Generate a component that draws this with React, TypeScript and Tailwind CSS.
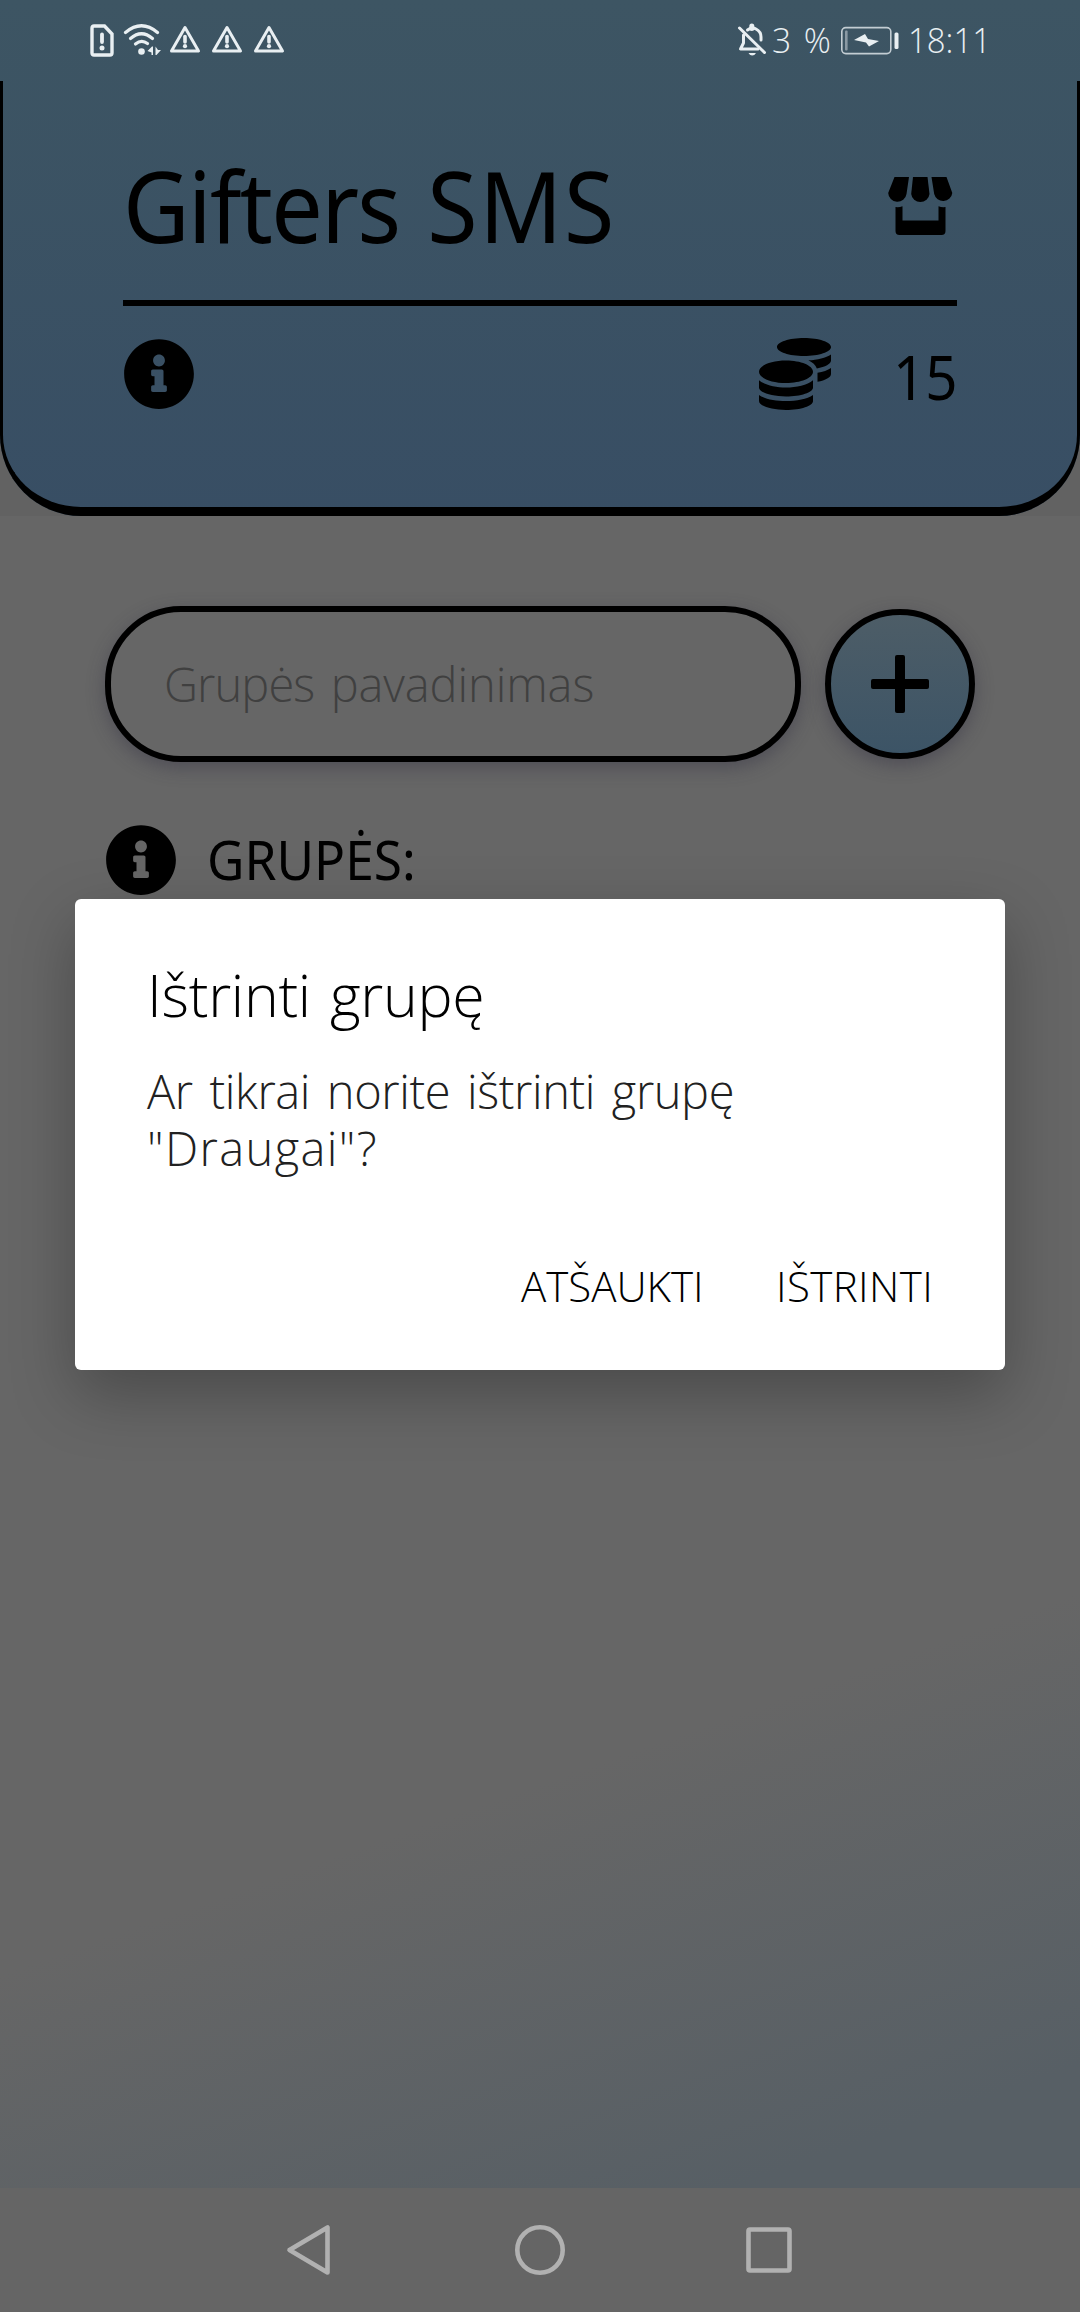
import type { ReactNode } from "react";
import { FaCoins, FaInfoCircle } from "react-icons/fa";

function Warning() {
  return (
    <svg width="32" height="32" viewBox="0 0 32 32" className="shrink-0">
      <path d="M16 4.500 L29.500 28 H2.500 Z" fill="none" stroke="#e9eff2" strokeWidth="3" strokeLinejoin="round" />
      <path d="M16 13.500V19" stroke="#e9eff2" strokeWidth="3.600" strokeLinecap="round" />
      <circle cx="16" cy="23.200" r="2.100" fill="#e9eff2" />
    </svg>
  );
}

function StatusBar() {
  return (
    <div className="flex h-[81px] items-start justify-between pl-[89px] pr-[96px] pt-[22px] text-[#e9eff2]">
      <div className="flex">
        <svg width="26" height="36" viewBox="0 0 26 36">
          <path d="M5 4 H15.500 L23 12 V31 Q23 33 21 33 H5 Q3 33 3 31 V6 Q3 4 5 4 Z" fill="none" stroke="#e9eff2" strokeWidth="3.400" />
          <path d="M13 12.500 V20" stroke="#e9eff2" strokeWidth="3.800" strokeLinecap="round" />
          <circle cx="13" cy="26" r="2.500" fill="#e9eff2" />
        </svg>
        <svg width="40" height="36" viewBox="0 0 40 36" className="ml-[7px]">
          <g fill="none" stroke="#e9eff2" strokeWidth="3.200" strokeLinecap="round">
            <path d="M3.500 10.500 Q19.500 -3 35.500 10.500" />
            <path d="M8.500 16.500 Q19.500 7 30.500 16.500" />
            <path d="M13.500 22 Q19.500 17 25.500 21.500" />
          </g>
          <circle cx="19.500" cy="29.500" r="3.300" fill="#e9eff2" />
          <path d="M25.500 29 L30 24.500 H31 V33 H29.500 V30.500 Z M33.500 24.500 L36 28 H39 L34.500 33 H33.500 Z" fill="#e9eff2" />
        </svg>
        <div className="ml-[7px] flex gap-[10px] pt-[1px]">
          <Warning />
          <Warning />
          <Warning />
        </div>
      </div>
      <div className="flex">
        <svg width="30" height="36" viewBox="0 0 30 36">
          <g fill="none" stroke="#e9eff2" strokeWidth="3" strokeLinecap="round" strokeLinejoin="round">
            <path d="M6.500 13 V21 L3.500 27 H21" />
            <path d="M10.500 8 Q15 4.500 19 7 Q24 9.500 24 15 V18" />
            <path d="M14.800 4 V6.500" strokeWidth="5" />
            <path d="M2.500 6 L27.500 30.500" />
          </g>
          <path d="M11.500 31 H19 Q17.500 33.500 15.200 33.500 Q13 33.500 11.500 31Z" fill="#e9eff2" />
        </svg>
        <span className="ml-[5px] w-[60px] origin-left scale-x-[0.96] whitespace-nowrap font-['Open_Sans'] text-[35px] font-light leading-[36px] [word-spacing:4px]">3 %</span>
        <svg width="60" height="36" viewBox="0 0 60 36" className="ml-[8px]">
          <rect x="1.800" y="5.600" width="49" height="26" rx="4" fill="none" stroke="#c3cdd3" strokeWidth="1.600" />
          <rect x="5" y="8.500" width="2.600" height="20" rx="1" fill="#8b9aa4" />
          <path d="M25 12 L28 17 L39 19 L29 24.500 L26 20.500 L14 18 Z" fill="#e9eff2" />
          <rect x="54.500" y="10.500" width="4" height="16.500" rx="1.500" fill="#e9eff2" />
        </svg>
        <span className="ml-[8px] w-[76px] origin-left scale-x-[0.94] whitespace-nowrap font-['Open_Sans'] text-[35px] font-light leading-[36px]">18:11</span>
      </div>
    </div>
  );
}

function StoreIcon() {
  return (
    <svg width="66" height="60" viewBox="0 0 66 60">
      <path d="M7.500 1 H22 L19.500 18 A9.200 9 0 0 1 1.200 17 Z" />
      <path d="M26 1 H40.500 L42.500 18 A9.200 9 0 0 1 24.200 18 Z" />
      <path d="M44.500 1 H59.500 L65.300 17 A9.200 9 0 0 1 47.200 18 Z" />
      <path d="M8.500 31 Q12 31.500 15.500 30.300 V44.500 H51.500 V30.300 Q55 31.500 58.500 31 V55 Q58.500 59 54.500 59 H12.500 Q8.500 59 8.500 55 Z" />
    </svg>
  );
}

function Header() {
  return (
    <header className="h-[435px] rounded-b-[81px] border-x-[3px] border-b-[9px] border-black px-[120px]">
      <div className="flex h-[219px] items-start justify-between pt-[74px]">
        <h1 className="origin-left scale-x-[0.925] whitespace-nowrap text-[99px] leading-[100px]">
          <span className="tracking-[-1.8px] [word-spacing:6px]">Gifters </span>
          <span className="tracking-[1.8px]">SMS</span>
        </h1>
        <div className="mr-[4px] mt-[21px]">
          <StoreIcon />
        </div>
      </div>
      <div className="h-[6px] bg-black" />
      <div className="flex items-start justify-between pt-[32px]">
        <FaInfoCircle size={72} />
        <div className="flex">
          <FaCoins size={72} />
          <span className="ml-[62px] w-[64px] origin-left scale-x-[0.91] text-[62px] leading-[76px]">15</span>
        </div>
      </div>
    </header>
  );
}

function GroupForm() {
  return (
    <div className="flex items-center gap-6 pl-[105px] pt-[90px]">
      <div className="flex h-[156px] w-[696px] items-center rounded-[76px] border-[6px] border-black bg-[#666] px-[53px] shadow-[0_6px_18px_rgba(50,48,66,0.45)]">
        <span className="whitespace-nowrap font-['Open_Sans'] text-[47px] font-light leading-[60px] text-[#404040]">
          <span className="tracking-[-0.9px] [word-spacing:5px]">Grupės </span>
          <span className="tracking-[-0.1px]">pavadinimas</span>
        </span>
      </div>
      <div className="flex size-[150px] items-center justify-center rounded-full border-[6px] border-black bg-linear-to-b from-[#4d5d67] to-[#3c5466] shadow-[0_6px_18px_rgba(50,48,66,0.45)]">
        <svg width="58" height="58" viewBox="0 0 58 58">
          <rect y="24" width="58" height="10" rx="2" />
          <rect x="24" width="10" height="58" rx="2" />
        </svg>
      </div>
    </div>
  );
}

function DialogButton({ children, className }: { children: ReactNode; className: string }) {
  return (
    <button className={`whitespace-nowrap text-left text-[42px] leading-[60px] text-black ${className}`}>{children}</button>
  );
}

function Dialog() {
  return (
    <div className="absolute left-[75px] top-[899px] z-20 flex h-[471px] w-[930px] flex-col rounded-[6px] bg-white pl-[72px] pt-[55px] font-['Open_Sans'] font-light shadow-[0_24px_64px_rgba(0,0,0,0.28)]">
      <h2 className="whitespace-nowrap text-[59px] leading-[80px] tracking-[-0.3px] text-black [word-spacing:4px]">Ištrinti grupę</h2>
      <p className="mt-[29px] whitespace-nowrap text-[47px] leading-[57px] text-[#212121]">
        <span className="tracking-[-0.4px] [word-spacing:5px]">Ar tikrai norite ištrinti grupę</span>
        <br />
        <span className="tracking-[1.400px]">"Draugai"?</span>
      </p>
      <div className="mt-[79px] flex pl-[374px]">
        <DialogButton className="w-[255px]">ATŠAUKTI</DialogButton>
        <DialogButton className="w-[160px] tracking-[0.4px]">IŠTRINTI</DialogButton>
      </div>
    </div>
  );
}

function NavigationBar() {
  return (
    <nav className="flex h-[124px] items-start bg-[#656565] pl-[285px] pt-[35px]">
      <svg width="510" height="54" viewBox="0 0 510 54" fill="none" stroke="#b1b1b1" strokeWidth="4.600" strokeLinejoin="round">
        <path d="M4.500 27 L42.500 4.500 V49.500 Z" />
        <circle cx="255" cy="27" r="22.700" />
        <rect x="463.500" y="6.500" width="41" height="41" rx="1.500" />
      </svg>
    </nav>
  );
}

export default function App() {
  return (
    <div className="relative flex h-[2312px] w-[1080px] flex-col overflow-hidden bg-[#666] font-['Noto_Sans',sans-serif] text-black">
      <div className="bg-[#626262]">
        <div className="h-[516px] rounded-b-[81px] bg-linear-to-b from-[#3d5563] to-[#384e64]">
          <StatusBar />
          <Header />
        </div>
      </div>
      <main className="flex-1 bg-[linear-gradient(160.5deg,#666_71%,#575f65_94%)]">
        <GroupForm />
        <div className="flex items-start pl-[105px] pt-[62px]">
          <FaInfoCircle size={72} />
          <span className="ml-[30px] origin-left scale-x-[0.935] whitespace-nowrap text-[55px] leading-[70px]">GRUPĖS:</span>
        </div>
      </main>
      <NavigationBar />
      <Dialog />
    </div>
  );
}
